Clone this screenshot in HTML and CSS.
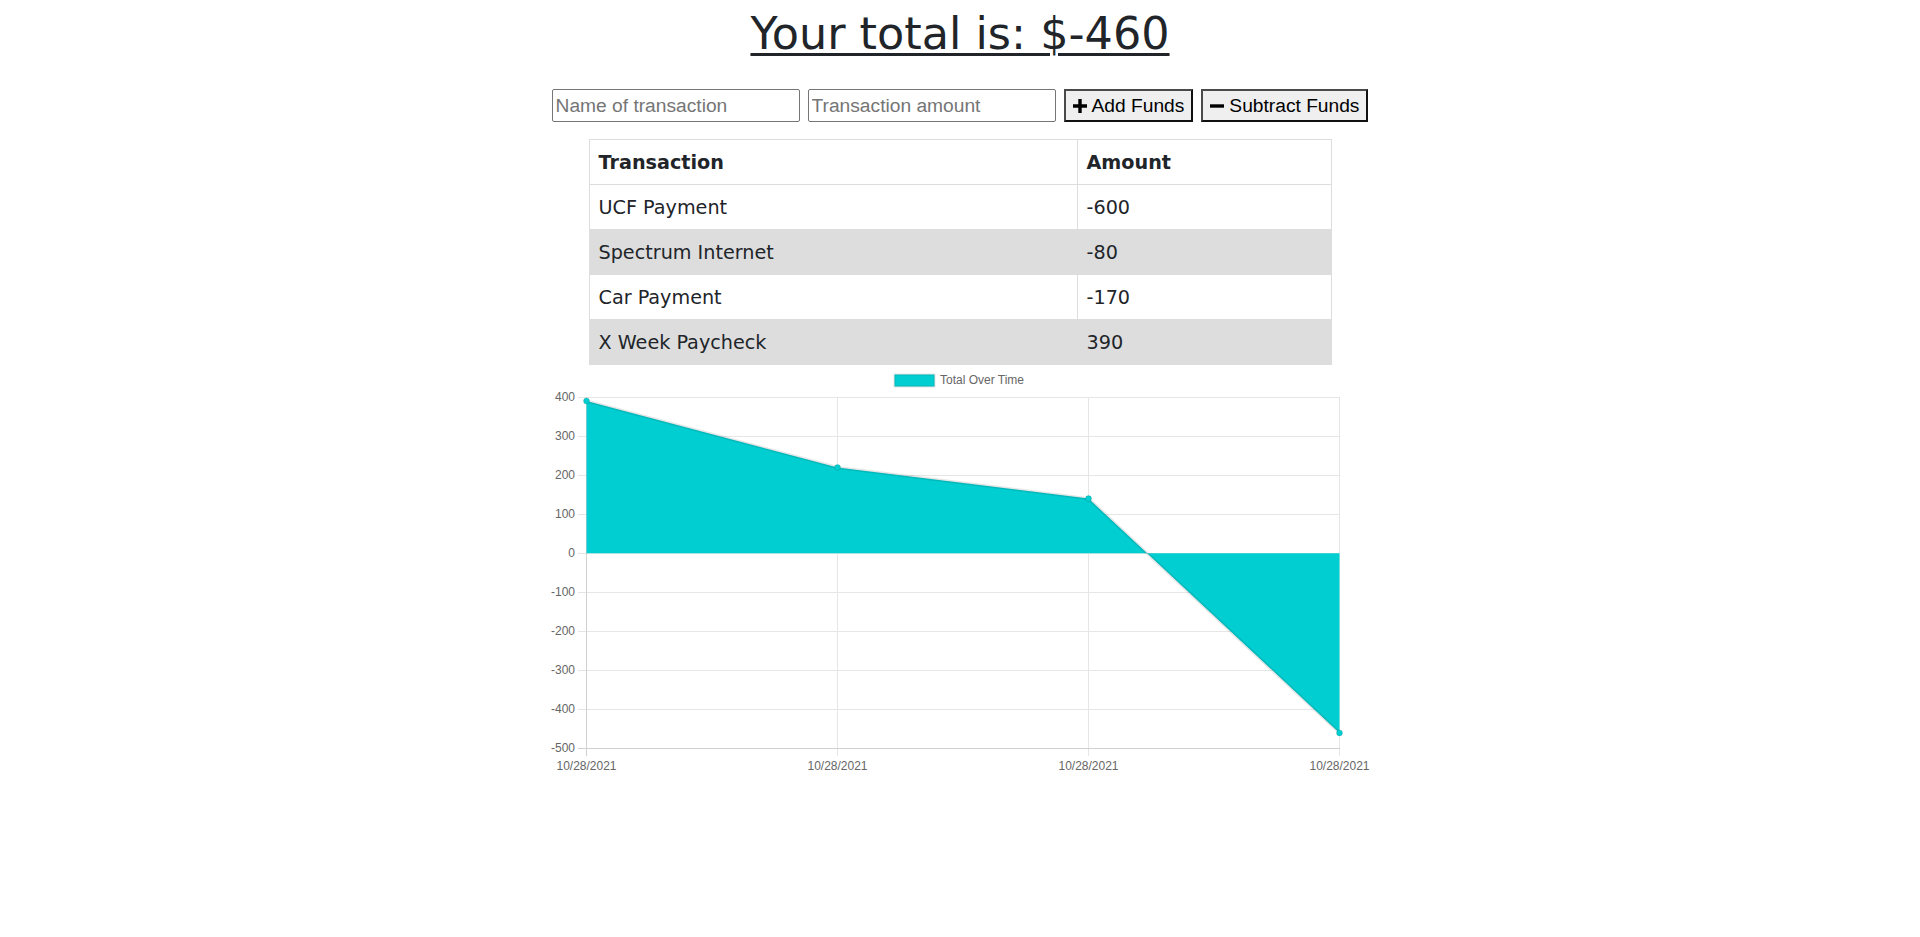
FILE: index.html
```html
<!DOCTYPE html>
<html lang="en">
<head>
<meta charset="utf-8">
<title>Budget Tracker</title>
<link rel="stylesheet" href="styles.css">
</head>
<body>
<h1 class="total">Your total is: $-460</h1>
<div class="form-row">
  <input class="field" type="text" placeholder="Name of transaction">
  <input class="field" type="text" placeholder="Transaction amount">
  <button class="btn" type="button"><svg class="ico" viewBox="0 0 14 14"><path d="M5.3 0h3.4v5.3H14v3.4H8.7V14H5.3V8.7H0V5.3h5.3z"/></svg>Add Funds</button>
  <button class="btn" type="button"><svg class="ico" viewBox="0 0 14 14"><rect x="0" y="5.3" width="14" height="3.4"/></svg>Subtract Funds</button>
</div>
<table class="tx">
  <colgroup><col class="c1"><col class="c2"></colgroup>
  <thead>
    <tr><th>Transaction</th><th>Amount</th></tr>
  </thead>
  <tbody>
    <tr><td>UCF Payment</td><td>-600</td></tr>
    <tr class="alt"><td>Spectrum Internet</td><td>-80</td></tr>
    <tr><td>Car Payment</td><td>-170</td></tr>
    <tr class="alt"><td>X Week Paycheck</td><td>390</td></tr>
  </tbody>
</table>
<svg class="chart" width="840" height="420" viewBox="0 0 840 420">
  <rect class="legend-box" x="354.5" y="9.5" width="40" height="12"/>
  <text class="legend-text" x="400" y="18.8">Total Over Time</text>

  <g class="grid">
    <line x1="38" x2="799.5" y1="32.5" y2="32.5"/>
    <line x1="38" x2="799.5" y1="71.5" y2="71.5"/>
    <line x1="38" x2="799.5" y1="110.5" y2="110.5"/>
    <line x1="38" x2="799.5" y1="149.5" y2="149.5"/>
    <line x1="38" x2="799.5" y1="188.5" y2="188.5"/>
    <line x1="38" x2="799.5" y1="227.5" y2="227.5"/>
    <line x1="38" x2="799.5" y1="266.5" y2="266.5"/>
    <line x1="38" x2="799.5" y1="305.5" y2="305.5"/>
    <line x1="38" x2="799.5" y1="344.5" y2="344.5"/>
    <line x1="297.5" x2="297.5" y1="32" y2="391"/>
    <line x1="548.5" x2="548.5" y1="32" y2="391"/>
    <line x1="799.5" x2="799.5" y1="32" y2="391"/>
  </g>
  <g class="axis">
    <line x1="46.5" x2="46.5" y1="32" y2="391"/>
    <line x1="38" x2="800" y1="383.5" y2="383.5"/>
  </g>

  <path class="area" d="M46.5 188.3 L46.5 36 L297.5 102.4 L548.5 133.6 L607.1 188.3 Z M607.1 188.3 L799.5 367.9 L799.5 188.3 Z"/>
  <polyline class="line" points="46.5,36 297.5,102.4 548.5,133.6 799.5,367.9"/>
  <g class="pts">
    <circle cx="46.5" cy="36" r="3"/>
    <circle cx="297.5" cy="102.4" r="3"/>
    <circle cx="548.5" cy="133.6" r="3"/>
    <circle cx="799.5" cy="367.9" r="3"/>
  </g>

  <g class="ylab">
    <text x="35" y="35.8">400</text>
    <text x="35" y="74.8">300</text>
    <text x="35" y="113.8">200</text>
    <text x="35" y="152.8">100</text>
    <text x="35" y="191.8">0</text>
    <text x="35" y="230.8">-100</text>
    <text x="35" y="269.8">-200</text>
    <text x="35" y="308.8">-300</text>
    <text x="35" y="347.8">-400</text>
    <text x="35" y="386.8">-500</text>
  </g>
  <g class="xlab">
    <text x="46.5" y="404.5">10/28/2021</text>
    <text x="297.5" y="404.5">10/28/2021</text>
    <text x="548.5" y="404.5">10/28/2021</text>
    <text x="799.5" y="404.5">10/28/2021</text>
  </g>
</svg>
</body>
</html>
```
FILE: styles.css
```css
html, body {
  margin: 0;
  padding: 0;
  background: #ffffff;
}

body {
  font-family: "DejaVu Sans", Verdana, sans-serif;
  color: #212529;
}

.total {
  margin: 8px 0 0;
  font-size: 44.5px;
  line-height: 51px;
  font-weight: normal;
  text-align: center;
  text-decoration: underline;
  text-decoration-thickness: 3px;
  text-underline-offset: 4px;
  color: #212529;
}

.form-row {
  margin-top: 30px;
  display: flex;
  justify-content: center;
  align-items: center;
  gap: 8px;
}

.field {
  box-sizing: border-box;
  width: 248px;
  height: 33px;
  margin: 0;
  padding: 1px 3px;
  border: 1px solid #767676;
  border-radius: 2px;
  font-family: "Liberation Sans", Arial, sans-serif;
  font-size: 19.2px;
  color: #000;
  background: #fff;
}

.field::placeholder {
  color: #757575;
  opacity: 1;
}

.btn {
  box-sizing: border-box;
  height: 33px;
  margin: 0;
  padding: 0 7px;
  display: inline-flex;
  align-items: center;
  gap: 5px;
  background: #efefef;
  border: 2px solid;
  border-color: #4a4a4a #111 #111 #4a4a4a;
  border-radius: 0;
  font-family: "Liberation Sans", Arial, sans-serif;
  font-size: 19.2px;
  color: #000;
}

.ico {
  width: 14px;
  height: 14px;
  fill: #000;
  flex: none;
}

.tx {
  margin: 17px auto 0;
  width: 742px;
  border-collapse: collapse;
  table-layout: fixed;
  font-size: 19.2px;
  line-height: 28px;
}

.c1 { width: 488px; }
.c2 { width: 254px; }

.tx th,
.tx td {
  border: 1px solid #dddddd;
  padding: 9px 9px 7px;
  text-align: left;
}

.tx th {
  font-weight: bold;
}

.tx .alt td {
  background: #dddddd;
}

.chart {
  display: block;
  margin: 0 auto;
}

.legend-box {
  fill: #00ced1;
  stroke: rgba(0, 0, 0, 0.1);
  stroke-width: 2;
}

.legend-text,
.ylab text,
.xlab text {
  font-family: "Liberation Sans", Arial, sans-serif;
  font-size: 12px;
  fill: #666666;
}

.ylab text {
  text-anchor: end;
}

.xlab text {
  text-anchor: middle;
}

.grid line {
  stroke: #e6e6e6;
  stroke-width: 1;
}

.axis line {
  stroke: #d0d0d0;
  stroke-width: 1;
}

.area {
  fill: #00ced1;
}

.line {
  fill: none;
  stroke: rgba(0, 0, 0, 0.1);
  stroke-width: 3;
  stroke-linejoin: miter;
}

.pts circle {
  fill: #00ced1;
  stroke: rgba(0, 0, 0, 0.1);
  stroke-width: 1;
}
```
